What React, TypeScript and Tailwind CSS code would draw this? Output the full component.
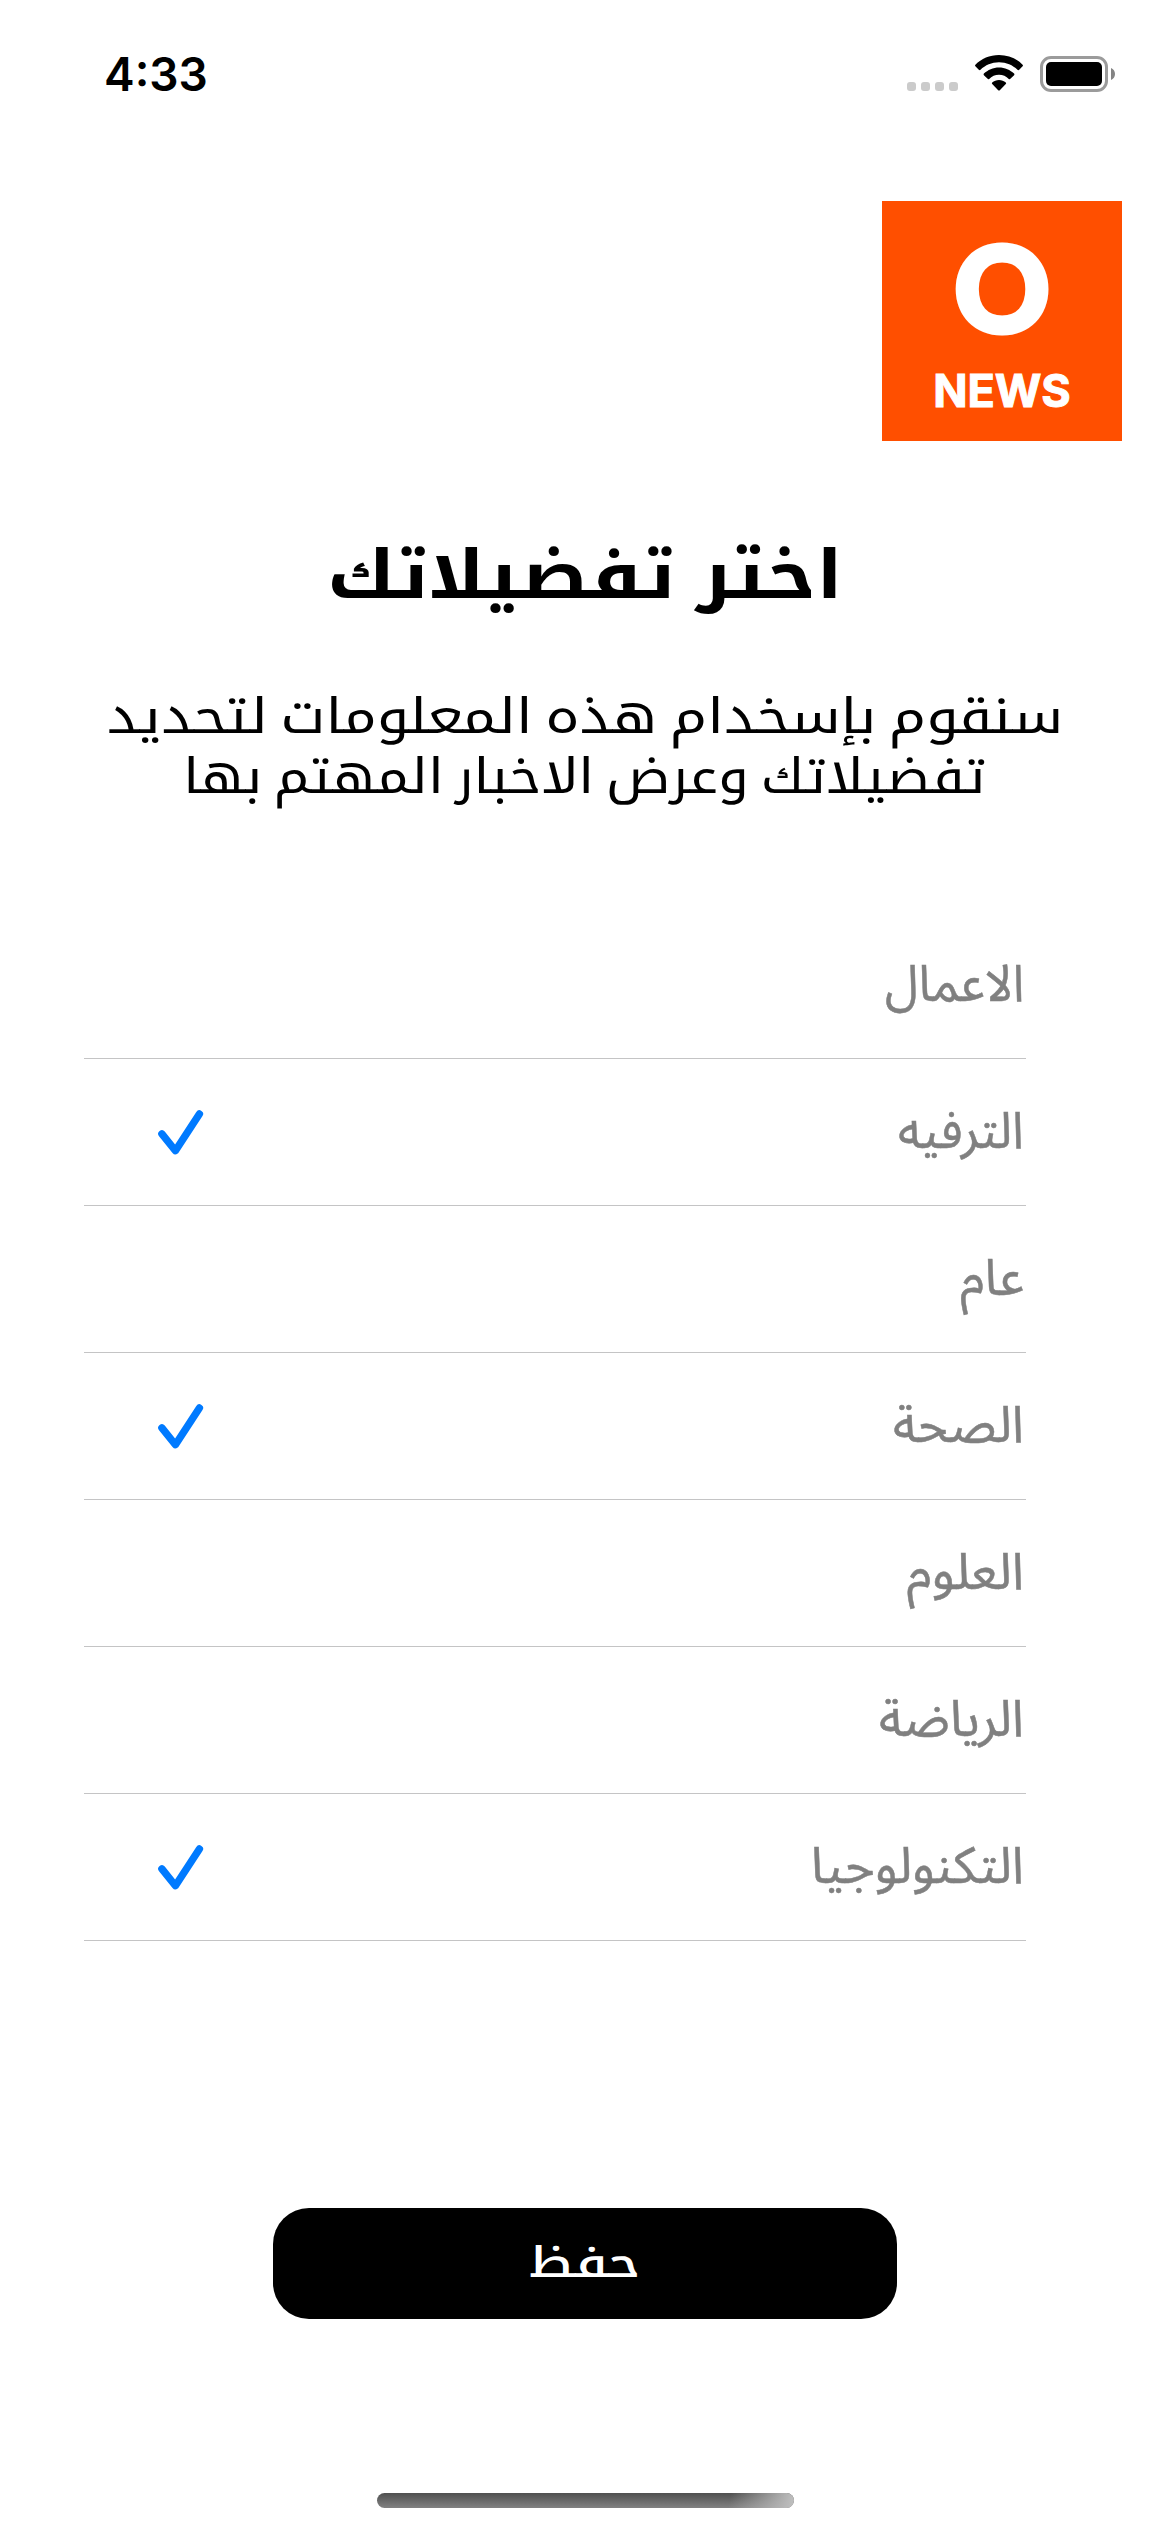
const categories = [
  { name: "الاعمال", selected: false, fit: "scale-x-[0.945]" },
  { name: "الترفيه", selected: true, fit: "scale-x-[0.970]" },
  { name: "عام", selected: false, fit: "scale-x-[0.980]" },
  { name: "الصحة", selected: true, fit: "scale-x-100" },
  { name: "العلوم", selected: false, fit: "scale-x-[1.010]" },
  { name: "الرياضة", selected: false, fit: "scale-x-100" },
  { name: "التكنولوجيا", selected: true, fit: "scale-x-100" },
];

function StatusBar() {
  return (
    <header dir="ltr" className="flex h-[157px] justify-between pt-[44px] pr-[54px] pl-[104px]">
      <span className="font-['Inter',sans-serif] text-[46px] leading-[60px] font-semibold">4:33</span>
      <div className="flex pt-[10px]">
        <div className="mt-[28px] mr-[17px] flex gap-[5px]">
          {[0, 1, 2, 3].map((i) => (
            <span key={i} className="size-[9px] rounded-[3px] bg-[#cbcbcb]" />
          ))}
        </div>
        <svg className="mt-px mr-[16px] h-[37px] w-[48px]" viewBox="0 0 48 37" fill="currentColor">
          <path d="M24 0C14.700 0 6.300 3.700 .4 9.700c-.5.500-.5 1.100 0 1.600l3.400 3.500c.5.500 1.200.500 1.700 0C10.200 10.200 16.700 7.300 24 7.300s13.800 2.900 18.500 7.500c.5.500 1.200.500 1.700 0l3.400-3.500c.5-.5.500-1.100 0-1.600C41.700 3.700 33.300 0 24 0z" />
          <path d="M24 12.400c-5.900 0-11.200 2.400-15.100 6.200-.5.500-.5 1.100 0 1.600l3.700 3.600c.5.500 1.100.500 1.600.1 2.500-2.500 6-4.100 9.800-4.100s7.300 1.600 9.800 4.100c.5.400 1.100.400 1.600-.1l3.700-3.600c.5-.5.500-1.100 0-1.600C35.200 14.800 29.900 12.400 24 12.400z" />
          <path d="M24 25c-2.600 0-5 .9-6.800 2.400-.5.500-.5 1.100 0 1.600l6 6.200c.5.500 1.100.500 1.600 0l6-6.200c.5-.5.500-1.100 0-1.600C29 25.900 26.600 25 24 25z" />
        </svg>
        <svg className="h-[38px] w-[77px]" viewBox="0 0 77 38">
          <rect x="2.500" y="3.500" width="65" height="33" rx="9.500" fill="none" stroke="#9b9b9b" strokeWidth="3" />
          <rect x="7" y="8" width="56" height="24" rx="5" />
          <path d="M72 14c2.400.8 4 3.200 4 6s-1.600 5.200-4 6z" fill="#848484" />
        </svg>
      </div>
    </header>
  );
}

function Logo() {
  return (
    <div
      dir="ltr"
      className="mr-[48px] flex size-[240px] flex-col items-center bg-[#ff4f00] pt-[26px] font-['Inter',sans-serif] text-white"
    >
      <span className="font-['Lato',sans-serif] text-[118px] leading-[120px] font-black [-webkit-text-stroke:5px_white]">O</span>
      <span className="mt-[14px] text-[45px] leading-[60px] font-bold [-webkit-text-stroke:1px_white]">NEWS</span>
    </div>
  );
}

function Check() {
  return (
    <svg className="mt-[1px] ml-[74px] h-[45px] w-[46px]" viewBox="0 0 46 45" fill="none" stroke="#007aff" strokeWidth="7.400" strokeLinecap="round" strokeLinejoin="round">
      <path d="M3.900 23.900 17.400 40.700 41.400 4" />
    </svg>
  );
}

export default function App() {
  return (
    <div dir="rtl" className="flex h-[2532px] w-[1170px] flex-col overflow-hidden bg-white text-black">
      <StatusBar />
      <div className="mt-[44px] flex">
        <Logo />
      </div>
      <main className="flex flex-col items-center font-['Noto_Kufi_Arabic','Noto_Sans_Arabic',sans-serif]">
        <h1 className="mt-[95px] scale-x-[1.157] text-[67px] leading-[80px] font-bold whitespace-nowrap [word-spacing:-4px]">اختر تفضيلاتك</h1>
        <p className="mt-[71px] flex flex-col items-center text-[49px] leading-[60px] whitespace-nowrap [word-spacing:-6px]">
          <span className="scale-x-[1.178]">سنقوم بإسخدام هذه المعلومات لتحديد</span>
          <span className="scale-x-[1.119]">تفضيلاتك وعرض الاخبار المهتم بها</span>
        </p>
        <ul className="mt-[105px] mr-[144px] ml-[84px] self-stretch font-['Noto_Sans_Arabic',sans-serif]">
          {categories.map((c) => (
            <li key={c.name} className="flex h-[147px] items-center justify-between border-b border-[#c4c4c5] pr-[2px]">
              <span className={`origin-right text-[51px] leading-[146px] text-[#808080] [-webkit-text-stroke:0.5px_#808080] ${c.fit}`}>{c.name}</span>
              {c.selected && <Check />}
            </li>
          ))}
        </ul>
        <button className="mt-[267px] flex h-[111px] w-[624px] items-center justify-center rounded-[36px] bg-black text-white">
          <span className="scale-x-[1.270] text-[42px] leading-[111px] font-medium">حفظ</span>
        </button>
      </main>
      <div className="mt-[174px] mr-[376px] h-[15px] w-[417px] overflow-hidden rounded-full bg-linear-to-b from-[#505050] to-[#828282]">
        <div className="h-full w-[75px] bg-[linear-gradient(100deg,transparent_15%,#bcbcbc_95%)]" />
      </div>
    </div>
  );
}
